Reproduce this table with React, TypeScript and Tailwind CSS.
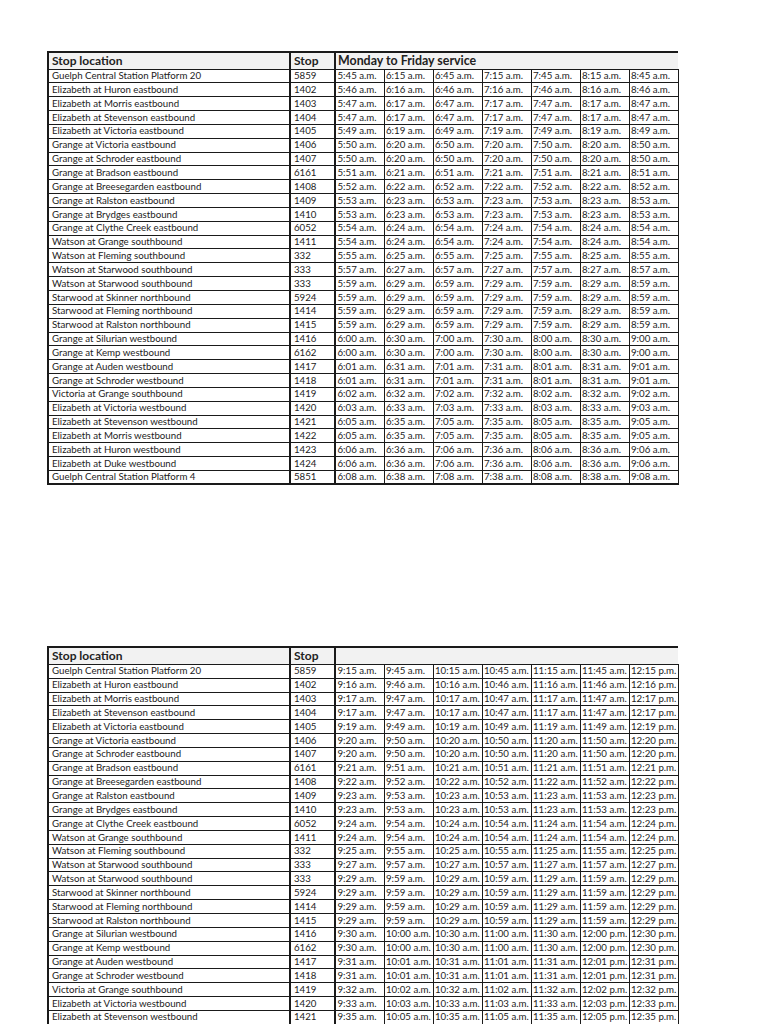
const stops: [string, string, number][] = [
  ['Guelph Central Station Platform 20', '5859', 0],
  ['Elizabeth at Huron eastbound', '1402', 1],
  ['Elizabeth at Morris eastbound', '1403', 2],
  ['Elizabeth at Stevenson eastbound', '1404', 2],
  ['Elizabeth at Victoria eastbound', '1405', 4],
  ['Grange at Victoria eastbound', '1406', 5],
  ['Grange at Schroder eastbound', '1407', 5],
  ['Grange at Bradson eastbound', '6161', 6],
  ['Grange at Breesegarden eastbound', '1408', 7],
  ['Grange at Ralston eastbound', '1409', 8],
  ['Grange at Brydges eastbound', '1410', 8],
  ['Grange at Clythe Creek eastbound', '6052', 9],
  ['Watson at Grange southbound', '1411', 9],
  ['Watson at Fleming southbound', '332', 10],
  ['Watson at Starwood southbound', '333', 12],
  ['Watson at Starwood southbound', '333', 14],
  ['Starwood at Skinner northbound', '5924', 14],
  ['Starwood at Fleming northbound', '1414', 14],
  ['Starwood at Ralston northbound', '1415', 14],
  ['Grange at Silurian westbound', '1416', 15],
  ['Grange at Kemp westbound', '6162', 15],
  ['Grange at Auden westbound', '1417', 16],
  ['Grange at Schroder westbound', '1418', 16],
  ['Victoria at Grange southbound', '1419', 17],
  ['Elizabeth at Victoria westbound', '1420', 18],
  ['Elizabeth at Stevenson westbound', '1421', 20],
  ['Elizabeth at Morris westbound', '1422', 20],
  ['Elizabeth at Huron westbound', '1423', 21],
  ['Elizabeth at Duke westbound', '1424', 21],
  ['Guelph Central Station Platform 4', '5851', 23],
];

// minutes after midnight -> "5:45 a.m."
function fmt(m: number) {
  const h = Math.floor(m / 60);
  const mm = m % 60;
  const suffix = h >= 12 ? 'p.m.' : 'a.m.';
  const h12 = h > 12 ? h - 12 : h;
  return `${h12}:${String(mm).padStart(2, '0')} ${suffix}`;
}

function Schedule({ start, title }: { start: number; title: string }) {
  const trips = [0, 1, 2, 3, 4, 5, 6].map((i) => start + i * 30);
  return (
    <table className="table-fixed border-collapse text-[#222222]" style={{ width: 630 }}>
      <colgroup>
        <col className="w-[242px]" />
        <col className="w-[45px]" />
        {trips.map((t) => (
          <col key={t} className="w-[49px]" />
        ))}
      </colgroup>
      <thead>
        <tr className="h-[17px] bg-[#f2f2f2]">
          <th className="border-t-2 border-l-2 border-b border-[#1a1a1a] px-[3px] text-left align-middle text-[12px] leading-none font-bold">
            Stop location
          </th>
          <th className="border-t-2 border-l-2 border-b border-[#1a1a1a] px-[3px] text-left align-middle text-[12px] leading-none font-bold">
            Stop
          </th>
          <th
            colSpan={7}
            className="border-t-2 border-l-2 border-b border-[#1a1a1a] px-[2px] text-left align-middle text-[12.4px] leading-none font-bold whitespace-nowrap"
          >
            {title}
          </th>
        </tr>
      </thead>
      <tbody>
        {stops.map(([name, code, offset], r) => {
          const last = r === stops.length - 1;
          return (
            <tr key={r} className="h-[13.85px]">
              <td
                className={`border-l-2 border-t border-r-2 border-[#1a1a1a] px-[3px] align-middle text-[9.7px] leading-none whitespace-nowrap overflow-hidden ${last ? 'border-b-2' : 'border-b'}`}
              >
                {name}
              </td>
              <td
                className={`border-t border-r-2 border-[#1a1a1a] px-[3px] align-middle text-[9.7px] leading-none whitespace-nowrap ${last ? 'border-b-2' : 'border-b'}`}
              >
                {code}
              </td>
              {trips.map((t) => (
                <td
                  key={t}
                  className={`border border-[#1a1a1a] px-[1.5px] align-middle text-[9.7px] leading-none whitespace-nowrap overflow-hidden ${last ? 'border-b-2' : ''}`}
                >
                  {fmt(t + offset)}
                </td>
              ))}
            </tr>
          );
        })}
      </tbody>
    </table>
  );
}

export default function App() {
  return (
    <div className="min-h-screen bg-white pt-[51px] pl-[47px]" style={{ fontFamily: 'Lato, "Open Sans", sans-serif' }}>
      <Schedule start={5 * 60 + 45} title="Monday to Friday service" />
      <div className="h-[161px]" />
      <Schedule start={9 * 60 + 15} title="" />
    </div>
  );
}
